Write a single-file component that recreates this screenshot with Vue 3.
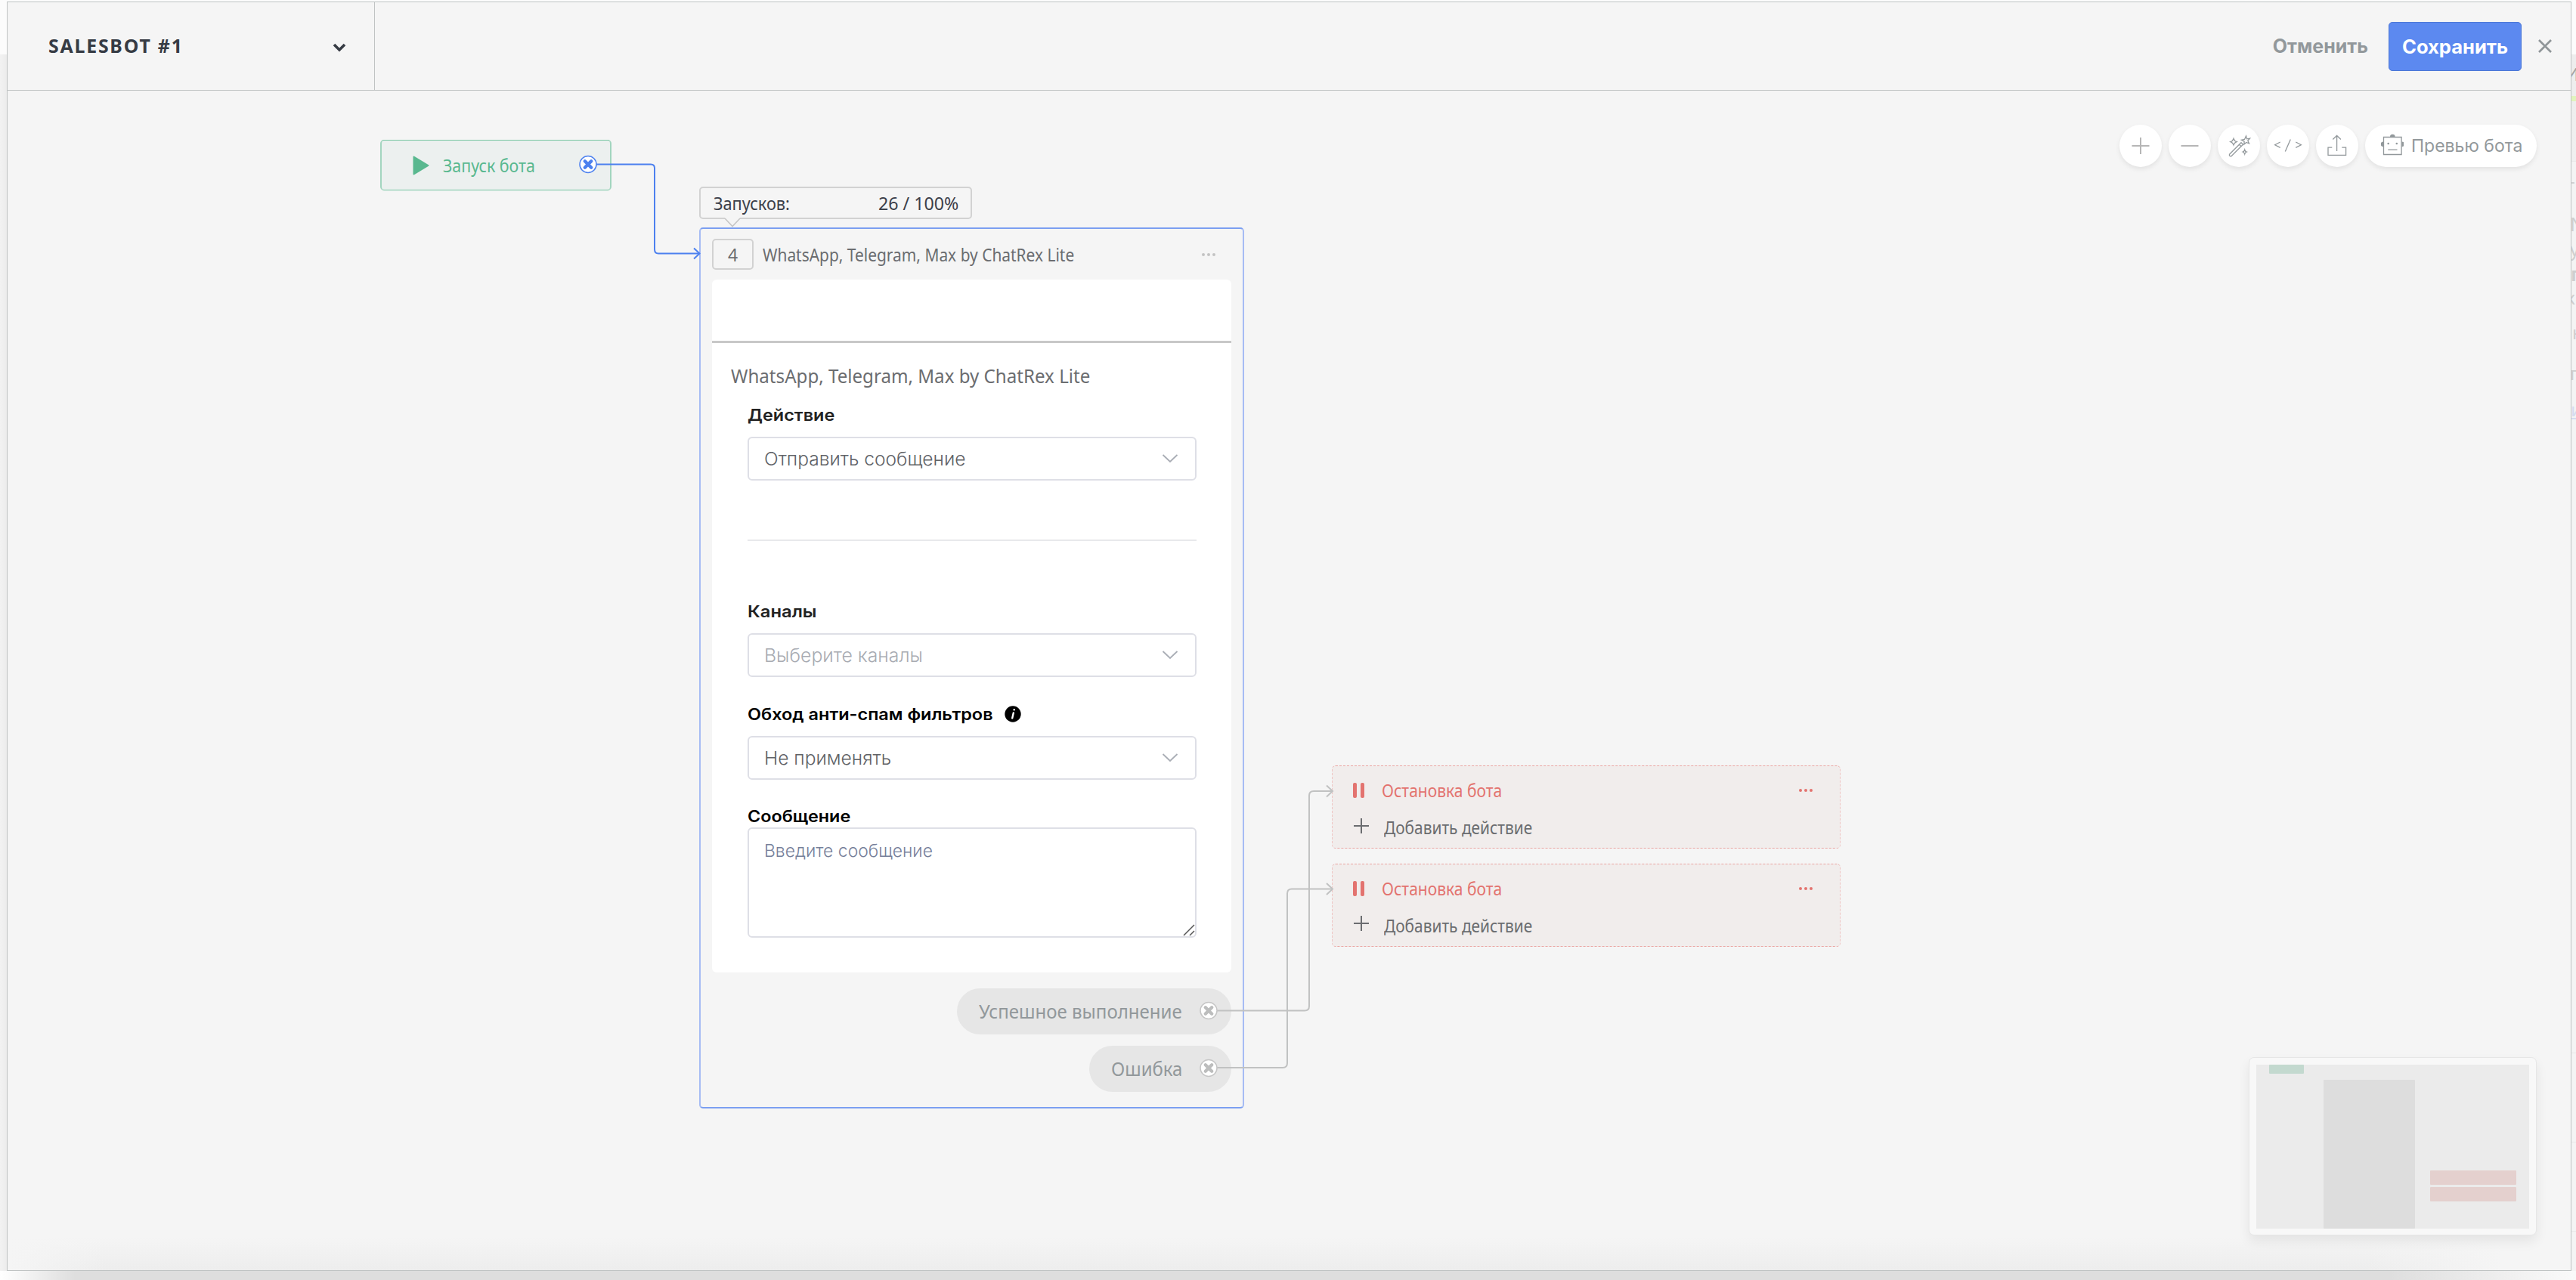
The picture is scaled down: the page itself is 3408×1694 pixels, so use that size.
<template>
  <div class="page">
    <div class="page-behind">
      <div class="behind-stripe"></div>
      <span v-for="(item, i) in behindTexts" :key="i" class="behind-text" :class="item.kind"
        :style="{ top: item.top + 'px', left: item.left + 'px', fontSize: item.size + 'px' }">{{ item.text }}</span>
    </div>

    <div class="builder">
      <header class="builder-header">
        <div class="bot-name">
          <span v-fit="179" class="bot-name-text">SALESBOT #1</span>
          <svg class="bot-name-arrow" width="18" height="13" viewBox="0 0 18 13">
            <path d="M2 3l7 7 7-7" />
          </svg>
        </div>
        <div class="header-actions">
          <div class="cancel"><span v-fit="126">Отменить</span></div>
          <button class="save"><span v-fit="140">Сохранить</span></button>
          <svg class="close" width="20" height="20" viewBox="0 0 20 20">
            <path d="M2 2l16 16M18 2L2 18" />
          </svg>
        </div>
      </header>

      <main class="canvas">
        <div class="world">
          <!-- стартовый блок -->
          <div class="node start-node">
            <svg class="play" width="22" height="26" viewBox="0 0 22 26">
              <path d="M1.5 1.5v23L20.5 13z" />
            </svg>
            <span v-fit="122" class="start-text">Запуск бота</span>
          </div>

          <!-- счетчик запусков -->
          <div class="counter">
            <span v-fit="101">Запусков:</span>
            <span v-fit="106">26 / 100%</span>
            <svg class="counter-tail" width="22" height="13" viewBox="0 0 22 13">
              <path class="tail-fill" d="M1 0h20v1L11 11.5 1 1z" />
              <path class="tail-line" d="M1 1l10 10.5L21 1" />
            </svg>
          </div>

          <div class="node widget-node">
            <div class="widget-head">
              <div class="widget-number">4</div>
              <span v-fit="412" class="widget-title">WhatsApp, Telegram, Max by ChatRex Lite</span>
              <div class="dots"><i></i><i></i><i></i></div>
            </div>
            <div class="widget-panel">
              <div class="panel-top"></div>
              <div class="panel-body">
                <div class="panel-title"><span v-fit="475">WhatsApp, Telegram, Max by ChatRex Lite</span></div>

                <div class="label label-soft label-first"><span v-fit="115">Действие</span></div>
                <div class="select">
                  <span v-fit="266">Отправить сообщение</span>
                  <svg class="arrow" width="22" height="14" viewBox="0 0 22 14"><path d="M1.5 2l9.5 9 9.5-9" /></svg>
                </div>

                <div class="divider"></div>

                <div class="label label-soft"><span v-fit="92">Каналы</span></div>
                <div class="select">
                  <span v-fit="210" class="placeholder">Выберите каналы</span>
                  <svg class="arrow" width="22" height="14" viewBox="0 0 22 14"><path d="M1.5 2l9.5 9 9.5-9" /></svg>
                </div>

                <div class="label label-next">
                  <span v-fit="325">Обход анти-спам фильтров</span>
                  <svg class="info" width="22" height="22" viewBox="0 0 22 22">
                    <circle cx="11" cy="11" r="10.7" />
                    <path d="M12.6 5.2h.2M11.800 9.400l-1.600 7" />
                  </svg>
                </div>
                <div class="select">
                  <span v-fit="168">Не применять</span>
                  <svg class="arrow" width="22" height="14" viewBox="0 0 22 14"><path d="M1.5 2l9.5 9 9.5-9" /></svg>
                </div>

                <div class="label label-last"><span v-fit="136">Сообщение</span></div>
                <div class="message">
                  <span v-fit="223">Введите сообщение</span>
                  <svg class="resize" width="18" height="18" viewBox="0 0 18 18"><path d="M2 16L16 2M10 16l6-6" /></svg>
                </div>
              </div>
            </div>
            <div class="exits">
              <div class="exit"><span v-fit="269">Успешное выполнение</span></div>
              <div class="exit"><span v-fit="94">Ошибка</span></div>
            </div>
          </div>

          <!-- блоки остановки -->
          <div v-for="node in stopNodes" :key="node.id" class="node stop-node" :style="{ top: node.top + 'px' }">
            <div class="stop-row">
              <div class="pause"><i></i><i></i></div>
              <span v-fit="159" class="stop-title">Остановка бота</span>
              <div class="dots dots-red"><i></i><i></i><i></i></div>
            </div>
            <div class="stop-row add-row">
              <svg class="add" width="22" height="22" viewBox="0 0 22 22"><path d="M11 1v20M1 11h20" /></svg>
              <span v-fit="196">Добавить действие</span>
            </div>
          </div>

          <!-- связи между блоками -->
          <svg class="links" width="3408" height="1694" viewBox="0 0 3408 1694">
            <g class="link link-blue">
              <path d="M789 217.5H861Q866 217.5 866 222.5V330Q866 335.5 871 335.5H924" />
              <path d="M918 328.5l7.5 7-7.5 7" />
            </g>
            <g class="link">
              <path d="M1610 1337.5H1726Q1732 1337.5 1732 1331.5V1053Q1732 1047 1738 1047H1762" />
              <path d="M1755 1039.5l8 7.5-8 7.5" />
              <path d="M1610 1413H1697Q1703 1413 1703 1407V1182.5Q1703 1176.5 1709 1176.5H1762" />
              <path d="M1755 1169l8 7.5-8 7.5" />
            </g>
            <g v-for="port in ports" :key="port.y" :class="['port', { 'port-blue': port.blue }]"
              :transform="`translate(${port.x} ${port.y})`">
              <circle r="11" />
              <path d="M-4.2 -4.2L4.2 4.2M4.2 -4.2L-4.2 4.2" />
            </g>
          </svg>
        </div>

        <div class="toolbar">
          <div class="tool">
            <svg width="56" height="56" viewBox="0 0 56 56"><path d="M28 17v22M16.5 28h23" /></svg>
          </div>
          <div class="tool">
            <svg width="56" height="56" viewBox="0 0 56 56"><path d="M16.5 28h23" /></svg>
          </div>
          <div class="tool">
            <svg class="thin" width="56" height="56" viewBox="0 0 56 56">
              <path d="M15.5 39.2L31 23.7l2.5 2.5L18 41.7q-1.2.6-2-.3-1-.9-.5-2.200zM28.5 26.2l2.5 2.5" />
              <path d="M37.5 15l1 3.8 4-.6-2.7 3 1.7 3.6-3.7-1.3-2.900 2.600.2-4-3.600-1.900 4-.8z" />
              <path d="M21 18.5q1 3.2 4 4.2-3 1-4 4.2-1-3.2-4-4.2 3-1 4-4.2z" />
              <path d="M35.7 33.2q.6 2.1 2.5 2.8-1.9.7-2.500 2.800-.6-2.100-2.500-2.800 1.900-.7 2.500-2.800z" />
            </svg>
          </div>
          <div class="tool">
            <svg class="thin" width="56" height="56" viewBox="0 0 56 56">
              <path d="M17.7 23l-7 3.7 7 3.7M31.3 19.5l-7 16M38.3 23l7 3.7-7 3.7" />
            </svg>
          </div>
          <div class="tool">
            <svg class="thin" width="56" height="56" viewBox="0 0 56 56">
              <path d="M27.6 35V14.5M22.3 19.5l5.3-5 5.3 5M21.3 30.2h-5.3v10.2h23.600V30.2h-5.300" />
            </svg>
          </div>
          <div class="tool preview">
            <svg class="thin robot" width="30" height="30" viewBox="0 0 30 30">
              <path d="M3.5 4.5h23.6v23H3.5zM9.3 21.2h12.2" />
              <path class="solid" d="M12 4a3.3 3.3 0 0 1 6.6 0zM3 10.5a3.3 3.3 0 0 0 0 6.6zM27.5 10.5a3.3 3.3 0 0 1 0 6.6z" />
              <circle class="solid" cx="9.7" cy="13" r="1.3" />
              <circle class="solid" cx="20.8" cy="13" r="1.3" />
            </svg>
            <span v-fit="147">Превью бота</span>
          </div>
        </div>

        <div class="minimap">
          <div class="minimap-inner">
            <i v-for="(b, i) in mapBlocks" :key="i" :class="b.kind"
              :style="{ left: b.x + 'px', top: b.y + 'px', width: b.w + 'px', height: b.h + 'px' }"></i>
          </div>
        </div>
      </main>
    </div>
  </div>
</template>

<script setup>
// подгоняет текст по ширине, которая задана в макете
const vFit = {
  mounted(el, { value }) {
    el.style.transform = `scaleX(${value / el.offsetWidth})`;
    el.style.marginRight = `${value - el.offsetWidth}px`;
  },
};

const stopNodes = [
  { id: 1, top: 1013 },
  { id: 2, top: 1142.5 },
];

const ports = [
  { x: 778, y: 217.5, blue: true },
  { x: 1599, y: 1337.5 },
  { x: 1599, y: 1413.5 },
];

const mapBlocks = [
  { kind: 'map-green', x: 17, y: 0, w: 46, h: 12 },
  { kind: 'map-grey', x: 89, y: 20, w: 121, h: 197 },
  { kind: 'map-red', x: 230, y: 140, w: 114, h: 19 },
  { kind: 'map-red', x: 230, y: 162, w: 114, h: 19 },
];

const behindTexts = [
  { text: 'И', top: 83, left: 3394, size: 24, kind: 'dark' },
  { text: '-', top: 224, left: 3399, size: 24, kind: '' },
  { text: 'N', top: 281, left: 3400, size: 25, kind: '' },
  { text: 'у', top: 315, left: 3400, size: 24, kind: '' },
  { text: 'п', top: 347, left: 3401, size: 25, kind: 'bold' },
  { text: 'к', top: 379, left: 3394, size: 24, kind: '' },
  { text: 'н', top: 425, left: 3403, size: 24, kind: '' },
  { text: 'п', top: 479, left: 3400, size: 24, kind: '' },
  { text: 'и', top: 527, left: 3401, size: 24, kind: 'link-text' },
];
</script>

<style>
body {
  overflow: hidden;
}
</style>

<style scoped>
.page {
  position: relative;
  box-sizing: border-box;
  width: 3408px;
  height: 1694px;
  padding: 2px 6px 12px 9px;
  overflow: hidden;
  background: linear-gradient(90deg, #fff 0, rgba(255, 255, 255, 0) 100px, rgba(255, 255, 255, 0) 3160px, #fafafa 3408px) 0 1682px / 3408px 12px no-repeat,
    linear-gradient(#dedede, #dedede) 0 1682px / 3408px 12px no-repeat,
    linear-gradient(90deg, #f2f2f2, #ececec) 0 72px / 9px 1610px no-repeat,
    #fcfcfc;
  font-family: "Noto Sans", "Open Sans", sans-serif;
}

.page span {
  display: inline-block;
  flex: none;
  transform-origin: left center;
  white-space: nowrap;
}

/* край страницы под окном */
.page-behind {
  position: absolute;
  left: 0;
  top: 0;
  width: 3408px;
  height: 1694px;
  overflow: hidden;
  background: linear-gradient(#ededed, #f0f0f0) 3402px 72px / 6px 141px no-repeat,
    linear-gradient(#e9e9e9, #e9e9e9) 3402px 213px / 6px 1px no-repeat,
    linear-gradient(#e9e9e9, #e9e9e9) 3402px 1393px / 6px 1px no-repeat,
    linear-gradient(#e9e9e9, #e9e9e9) 3402px 1511px / 6px 1px no-repeat,
    linear-gradient(#e9e9e9, #e9e9e9) 3402px 1629px / 6px 1px no-repeat,
    linear-gradient(#f4f4f4, #f4f4f4) 3402px 214px / 6px 1468px no-repeat;
}

.behind-stripe {
  position: absolute;
  left: 3400px;
  top: 127px;
  width: 8px;
  height: 7px;
  background: #e1f4bd;
}

.behind-text {
  position: absolute;
  color: #cfcfcf;
  line-height: 30px;
}

.behind-text.dark {
  color: #a3a3a3;
}

.behind-text.bold {
  font-weight: 700;
}

.behind-text.link-text {
  color: #d5dcf0;
  text-decoration: underline;
}

.builder {
  position: relative;
  display: flex;
  flex-direction: column;
  box-sizing: border-box;
  height: 1680px;
  border: 1px solid #bfc3c3;
  background: #f5f5f5;
}

.builder-header {
  display: flex;
  justify-content: space-between;
  flex: none;
  box-sizing: border-box;
  height: 117px;
  border-bottom: 1px solid #c0c3c3;
}

.bot-name {
  display: flex;
  align-items: center;
  justify-content: space-between;
  box-sizing: border-box;
  width: 486px;
  padding: 0 37px 2px 54px;
  border-right: 1px solid #c0c3c3;
  color: #363b44;
}

.bot-name-text {
  font-size: 25px;
  font-weight: 700;
  letter-spacing: 1.8px;
}

.bot-name-arrow {
  margin-top: 4px;
  fill: none;
  stroke: currentColor;
  stroke-width: 3.6;
}

.header-actions {
  display: flex;
  align-items: center;
  padding-right: 24px;
  font-family: Inter, Roboto, sans-serif;
  font-size: 25px;
  font-weight: 700;
}

.cancel {
  margin-right: 27px;
  color: #92989b;
}

.save {
  display: flex;
  align-items: center;
  justify-content: center;
  box-sizing: border-box;
  width: 176px;
  height: 65px;
  margin-top: 1px;
  padding: 0;
  border: 1px solid #4b77d6;
  border-radius: 5px;
  background: #5c89f0;
  color: #fff;
  font: inherit;
}

.close {
  margin-left: 21px;
  stroke: #8f9598;
  stroke-width: 2.6;
}

.canvas {
  position: relative;
  flex: 1;
  overflow: hidden;
  background: linear-gradient(90deg, #f5f5f5 0, rgba(245, 245, 245, 0) 130px, rgba(245, 245, 245, 0) 3120px, #f5f5f5 3300px) 0 100% / 100% 50px no-repeat,
    linear-gradient(#f5f5f5, #ededed) 0 100% / 100% 44px no-repeat,
    #f5f5f5;
}

.world {
  position: absolute;
  left: -10px;
  top: -120px;
  width: 3408px;
  height: 1694px;
  color: #6b6d70;
}

.node {
  position: absolute;
  box-sizing: border-box;
  border-style: solid;
  border-radius: 5px;
}

.start-node {
  left: 503px;
  top: 185px;
  display: flex;
  align-items: center;
  width: 306px;
  height: 67px;
  padding-left: 41px;
  border-width: 1px 2px;
  border-color: #74c4a0 #a3d5bf;
  background: #ecf0ef;
  color: #59b88f;
}

.play {
  fill: #59b88f;
  stroke: #59b88f;
  stroke-width: 2;
  stroke-linejoin: round;
}

.start-text {
  margin-left: 18px;
  font-size: 24px;
}

.counter {
  position: absolute;
  left: 925px;
  top: 247px;
  display: flex;
  align-items: center;
  justify-content: space-between;
  box-sizing: border-box;
  width: 361px;
  height: 43px;
  padding: 1px 16px 0 17px;
  border: 2px solid #d2d2d2;
  border-radius: 5px;
  background: #f5f5f5;
  color: #3c404a;
  font-size: 23px;
}

.counter-tail {
  position: absolute;
  left: 31px;
  top: 39px;
}

.tail-fill {
  fill: #f5f5f5;
}

.tail-line {
  fill: none;
  stroke: #c6c6c6;
  stroke-width: 1.6;
}

.widget-node {
  left: 925px;
  top: 301px;
  width: 721px;
  height: 1166px;
  padding: 0 15px;
  border-width: 2px;
  border-color: #7b9ff1 #a6bcf4;
}

.widget-head {
  display: flex;
  align-items: center;
  height: 67px;
}

.widget-number {
  display: flex;
  align-items: center;
  justify-content: center;
  box-sizing: border-box;
  width: 55px;
  height: 41px;
  border: 2px solid #d2d2d2;
  border-radius: 5px;
  font-size: 23px;
}

.widget-title {
  margin-left: 12px;
  font-size: 23px;
}

.dots {
  display: flex;
  gap: 3px;
  margin-left: auto;
  margin-right: 21px;
}

.dots i {
  width: 4px;
  height: 4px;
  border-radius: 50%;
  background: #c3c3c3;
}

.dots-red i {
  background: #e3736f;
}

.widget-panel {
  height: 917px;
  border-radius: 6px;
  background: #fff;
}

.panel-top {
  height: 81px;
  border-bottom: 3px solid #c8c8c8;
}

.panel-body {
  padding: 23px 46px 0 47px;
  font-family: Inter, Roboto, sans-serif;
}

.panel-title {
  height: 40px;
  margin-left: -22px;
  font-family: "Noto Sans", "Open Sans", sans-serif;
  font-size: 26px;
  line-height: 40px;
}

.label {
  display: flex;
  align-items: center;
  height: 30px;
  margin-top: 78px;
  color: #000;
  font-size: 22px;
  font-weight: 600;
}

.label-soft {
  color: #222;
}

.label-first {
  margin-top: 17px;
}

.label-next {
  margin-top: 34px;
}

.label-last {
  margin-top: 33px;
}

.info {
  margin-left: 15px;
}

.info path {
  fill: none;
  stroke: #fff;
  stroke-width: 2.4;
  stroke-linecap: round;
}

.select {
  display: flex;
  align-items: center;
  justify-content: space-between;
  box-sizing: border-box;
  height: 58px;
  margin-top: 14px;
  padding: 0 22px 0 20px;
  border: 2px solid #dedfe6;
  border-radius: 6px;
  color: #606266;
  font-size: 24px;
  font-weight: 300;
}

.placeholder {
  color: #a8abb2;
}

.arrow {
  fill: none;
  stroke: #a9adb5;
  stroke-width: 1.8;
}

.divider {
  height: 2px;
  margin-top: 78px;
  background: #e8e9eb;
}

.message {
  position: relative;
  box-sizing: border-box;
  height: 146px;
  padding: 14px 20px;
  border: 2px solid #dedfe6;
  border-radius: 6px;
  color: #76809a;
  font-size: 23px;
  font-weight: 300;
  line-height: 30px;
}

.resize {
  position: absolute;
  right: -1px;
  bottom: -1px;
  stroke: #555;
  stroke-width: 1.5;
}

.exits {
  display: flex;
  flex-direction: column;
  align-items: flex-end;
  gap: 15px;
  padding-top: 21px;
}

.exit {
  box-sizing: border-box;
  height: 61px;
  padding: 0 65px 0 29px;
  border-radius: 31px;
  background: #e6e6e6;
  color: #92989b;
  font-size: 26px;
  line-height: 61px;
}

.stop-node {
  left: 1762px;
  width: 673px;
  height: 110px;
  padding: 13px 0 0 27px;
  border-width: 1px;
  border-style: dashed;
  border-color: #eaa5a2 #efc4c2;
  background: #f1edec;
  font-size: 23px;
}

.stop-row {
  display: flex;
  align-items: center;
  height: 38px;
}

.pause {
  display: flex;
  gap: 5px;
  width: 38px;
}

.pause i {
  width: 5px;
  height: 20px;
  border-radius: 2px;
  background: #e3736f;
}

.stop-title {
  color: #e3736f;
}

.stop-node .dots {
  margin-right: 36px;
}

.add-row {
  height: 40px;
  margin-top: 10px;
}

.add {
  margin: -5px 19px 0 0;
  stroke: #6b6d70;
  stroke-width: 2;
}

.links {
  position: absolute;
  left: 0;
  top: 0;
}

.link path {
  fill: none;
  stroke: #c1c2c2;
  stroke-width: 2;
}

.link-blue path {
  stroke: #4c80ef;
}

.port circle {
  fill: #fff;
  stroke: #c6c6c6;
  stroke-width: 1.5;
}

.port path {
  stroke: #bcbdbd;
  stroke-width: 4.4;
  stroke-linecap: round;
}

.port-blue circle {
  stroke: #4c80ef;
}

.port-blue path {
  stroke: #4c80ef;
}

.toolbar {
  position: absolute;
  right: 45px;
  top: 45px;
  display: flex;
  gap: 9px;
}

.tool {
  width: 56px;
  height: 56px;
  border-radius: 28px;
  background: #fff;
  box-shadow: 0 3px 6px rgba(0, 0, 0, 0.08);
}

.tool svg {
  display: block;
  fill: none;
  stroke: #b6b6b6;
  stroke-width: 2;
}

.tool .thin {
  stroke: #92989b;
  stroke-width: 1.3;
}

.tool .solid {
  fill: #92989b;
  stroke: none;
}

.preview {
  display: flex;
  align-items: center;
  width: 227px;
  color: #92989b;
  font-family: Inter, Roboto, sans-serif;
  font-size: 23px;
}

.robot {
  margin: -2px 10px 0 21px;
}

.minimap {
  position: absolute;
  right: 45px;
  bottom: 46px;
  box-sizing: border-box;
  width: 381px;
  height: 236px;
  padding: 9px;
  border: 1px solid #e6e6e6;
  border-radius: 7px;
  background: #f8f8f8;
  box-shadow: 0 8px 16px rgba(0, 0, 0, 0.07);
}

.minimap-inner {
  position: relative;
  height: 217px;
  overflow: hidden;
  background: #ebebeb;
}

.minimap-inner i {
  position: absolute;
  border-radius: 1px;
}

.map-green {
  background: #c3d9cf;
}

.map-grey {
  background: #dddddd;
}

.map-red {
  background: #e4d0ce;
}
</style>
